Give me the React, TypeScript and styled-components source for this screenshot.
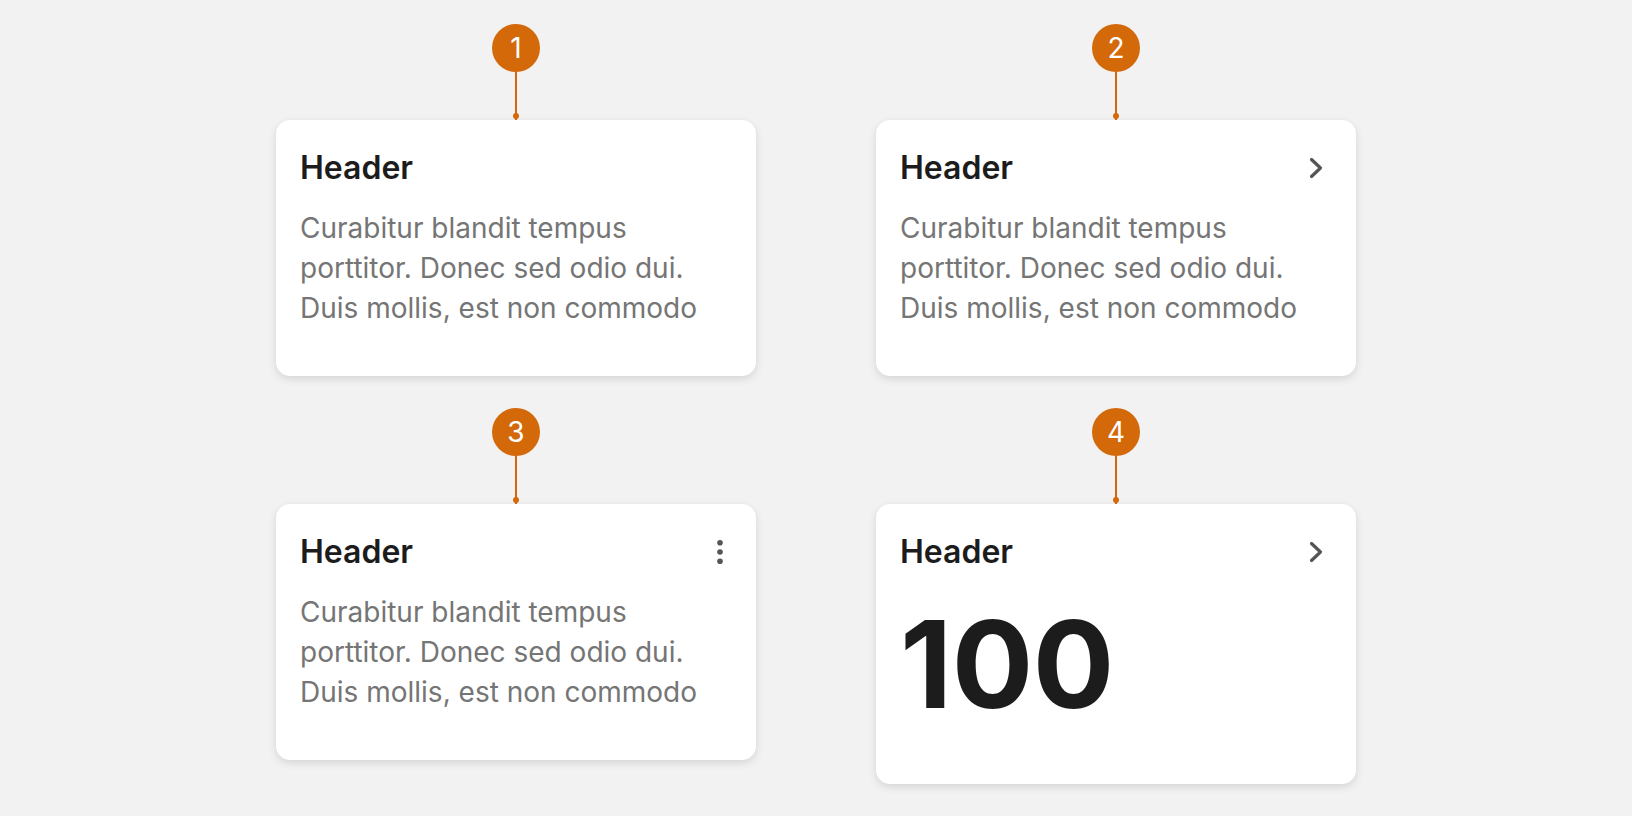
import React from "react";
import styled, { createGlobalStyle } from "styled-components";

const GlobalStyle = createGlobalStyle`
  html, body {
    margin: 0;
    padding: 0;
    background: #f2f2f2;
    font-family: Inter, "Noto Sans", "Liberation Sans", sans-serif;
  }
  * { box-sizing: border-box; }
`;

const Page = styled.div`
  min-height: 816px;
  display: grid;
  grid-template-columns: 480px 480px;
  column-gap: 120px;
  row-gap: 32px;
  justify-content: center;
  align-content: start;
  align-items: start;
  padding-top: 24px;
`;

const Item = styled.div`
  display: flex;
  flex-direction: column;
  align-items: center;
`;

const Badge = styled.div`
  width: 48px;
  height: 48px;
  border-radius: 50%;
  background: #d4690a;
  color: #ffffff;
  display: flex;
  align-items: center;
  justify-content: center;
  font-size: 28px;
  font-weight: 400;
  line-height: 1;
`;

const Connector = styled.div`
  position: relative;
  width: 2px;
  height: 48px;
  background: #d4690a;
  &::after {
    content: "";
    position: absolute;
    left: 50%;
    bottom: 1px;
    width: 6px;
    height: 6px;
    margin-left: -3px;
    border-radius: 50%;
    background: #d4690a;
  }
`;

const Card = styled.div`
  width: 480px;
  min-height: 256px;
  background: #ffffff;
  border-radius: 14px;
  padding: 24px 24px 48px;
  box-shadow: 0 3px 8px rgba(0, 0, 0, 0.12), 0 0 1px rgba(0, 0, 0, 0.06);
`;

const HeaderRow = styled.div`
  display: flex;
  align-items: center;
  justify-content: space-between;
  height: 48px;
`;

const Title = styled.div`
  font-size: 32px;
  line-height: 48px;
  font-weight: 600;
  color: #1c1c1c;
`;

const Body = styled.p`
  margin: 16px 0 0;
  font-size: 28px;
  line-height: 40px;
  font-weight: 400;
  color: #757575;
`;

const BigNumber = styled.div`
  margin-top: 16px;
  font-size: 121px;
  line-height: 144px;
  font-weight: 700;
  color: #1c1c1c;
  letter-spacing: -0.5px;
`;

const IconBox = styled.div<{ $offset: number }>`
  display: flex;
  align-items: center;
  justify-content: center;
  width: 32px;
  height: 32px;
  margin-right: ${(p) => p.$offset}px;
  color: #555555;
`;

const Chevron = () => (
  <IconBox $offset={-1}>
    <svg width="32" height="32" viewBox="0 0 32 32" fill="none">
      <polyline
        points="10.5,7.5 19.5,16 10.5,24.5"
        stroke="currentColor"
        strokeWidth="3.2"
        strokeLinecap="round"
        strokeLinejoin="round"
      />
    </svg>
  </IconBox>
);

const Kebab = () => (
  <IconBox $offset={-4}>
    <svg width="32" height="32" viewBox="0 0 32 32" fill="currentColor">
      <circle cx="16" cy="6.7" r="2.8" />
      <circle cx="16" cy="16" r="2.8" />
      <circle cx="16" cy="25.3" r="2.8" />
    </svg>
  </IconBox>
);

const text = "Curabitur blandit tempus porttitor. Donec sed odio dui. Duis mollis, est non commodo";

export default function App() {
  return (
    <>
      <GlobalStyle />
      <Page>
        <Item>
          <Badge>1</Badge>
          <Connector />
          <Card>
            <HeaderRow>
              <Title>Header</Title>
            </HeaderRow>
            <Body>{text}</Body>
          </Card>
        </Item>
        <Item>
          <Badge>2</Badge>
          <Connector />
          <Card>
            <HeaderRow>
              <Title>Header</Title>
              <Chevron />
            </HeaderRow>
            <Body>{text}</Body>
          </Card>
        </Item>
        <Item>
          <Badge>3</Badge>
          <Connector />
          <Card>
            <HeaderRow>
              <Title>Header</Title>
              <Kebab />
            </HeaderRow>
            <Body>{text}</Body>
          </Card>
        </Item>
        <Item>
          <Badge>4</Badge>
          <Connector />
          <Card>
            <HeaderRow>
              <Title>Header</Title>
              <Chevron />
            </HeaderRow>
            <BigNumber>100</BigNumber>
          </Card>
        </Item>
      </Page>
    </>
  );
}
